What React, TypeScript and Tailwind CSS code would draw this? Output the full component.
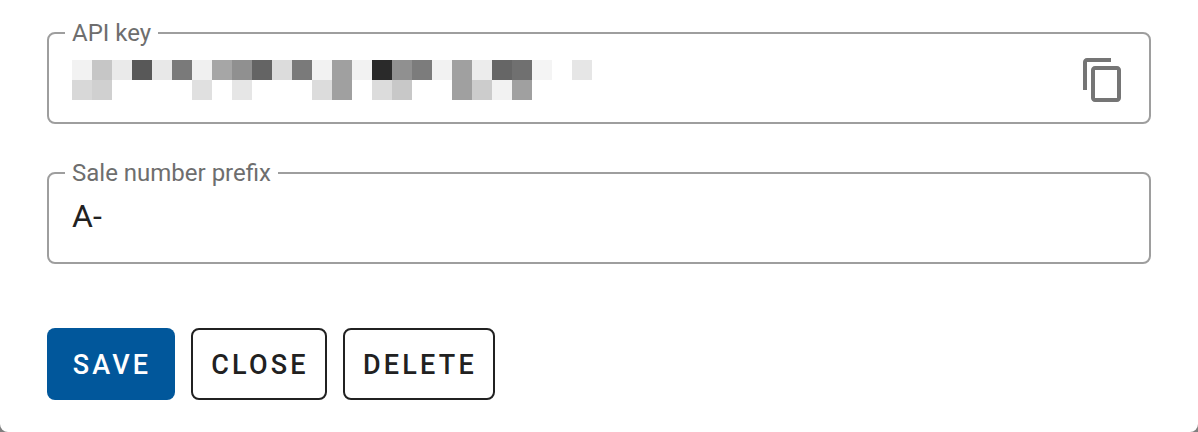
import React from 'react';

const topRow = [
  'bg-[#f2f2f2]', 'bg-[#c6c6c6]', 'bg-[#eaeaea]', 'bg-[#585858]', 'bg-[#e8e8e8]', 'bg-[#7a7a7a]', 'bg-[#f0f0f0]',
  'bg-[#a6a6a6]', 'bg-[#909090]', 'bg-[#646464]', 'bg-[#dcdcdc]', 'bg-[#7a7a7a]', 'bg-[#f2f2f2]', 'bg-[#a0a0a0]',
  'bg-[#f2f2f2]', 'bg-[#2a2a2a]', 'bg-[#909090]', 'bg-[#7c7c7c]', 'bg-[#f2f2f2]', 'bg-[#a0a0a0]', 'bg-[#ececec]',
  'bg-[#666666]', 'bg-[#707070]', 'bg-[#f4f4f4]', 'bg-white', 'bg-[#e6e6e6]',
];

const bottomRow = [
  'bg-[#d8d8d8]', 'bg-[#d0d0d0]', 'bg-white', 'bg-white', 'bg-white', 'bg-white', 'bg-[#e0e0e0]',
  'bg-white', 'bg-[#e6e6e6]', 'bg-white', 'bg-white', 'bg-white', 'bg-[#dcdcdc]', 'bg-[#a0a0a0]',
  'bg-white', 'bg-[#dcdcdc]', 'bg-[#c8c8c8]', 'bg-white', 'bg-white', 'bg-[#a0a0a0]', 'bg-[#cccccc]',
  'bg-[#f2f2f2]', 'bg-[#a0a0a0]', 'bg-white', 'bg-white', 'bg-white',
];

function OutlinedField({ label, children }: { label: string; children: React.ReactNode }) {
  return (
    <fieldset className="h-[102px] rounded-lg border-2 border-[#9e9e9e] pl-[23px] pr-[22px] pb-[6px] flex items-center min-w-0">
      <legend className="px-[7px] -ml-[7px] text-[24px] leading-[22px] text-[#6e6e6e]">{label}</legend>
      {children}
    </fieldset>
  );
}

function CopyIcon() {
  return (
    <svg viewBox="0 0 24 24" className="w-12 h-12 fill-[#757575] shrink-0">
      <path d="M16 1H4c-1.1 0-2 .9-2 2v14h2V3h12V1zm3 4H8c-1.1 0-2 .9-2 2v14c0 1.1.9 2 2 2h11c1.1 0 2-.9 2-2V7c0-1.1-.9-2-2-2zm0 16H8V7h11v14z" />
    </svg>
  );
}

export default function App() {
  return (
    <div className="w-[1198px] h-[432px] bg-[#7f7f7f] overflow-hidden font-['Roboto',sans-serif]">
      <div className="h-full bg-white rounded-b-lg pl-[47px] pr-[47px] pt-[22px]">
        <OutlinedField label="API key">
          <div className="flex-1">
            <div className="flex">
              {topRow.map((c, i) => (
                <div key={i} className={`w-5 h-5 ${c}`} />
              ))}
            </div>
            <div className="flex">
              {bottomRow.map((c, i) => (
                <div key={i} className={`w-5 h-5 ${c}`} />
              ))}
            </div>
          </div>
          <CopyIcon />
        </OutlinedField>

        <div className="mt-[38px]">
          <OutlinedField label="Sale number prefix">
            <span className="text-[32px] leading-none text-[#212121] -mt-[8px]">A-</span>
          </OutlinedField>
        </div>

        <div className="flex gap-4 mt-[64px]">
          <button className="h-[72px] w-[128px] pl-[2px] pt-[2px] rounded-lg bg-[#01579b] text-white text-[27px] font-medium tracking-[3.2px]">
            SAVE
          </button>
          <button className="h-[72px] w-[136px] pl-[2px] pt-[2px] rounded-lg border-2 border-[#212121] text-[#212121] text-[27px] font-medium tracking-[3.2px]">
            CLOSE
          </button>
          <button className="h-[72px] w-[152px] pl-[2px] pt-[2px] rounded-lg border-2 border-[#212121] text-[#212121] text-[27px] font-medium tracking-[3.2px]">
            DELETE
          </button>
        </div>
      </div>
    </div>
  );
}
